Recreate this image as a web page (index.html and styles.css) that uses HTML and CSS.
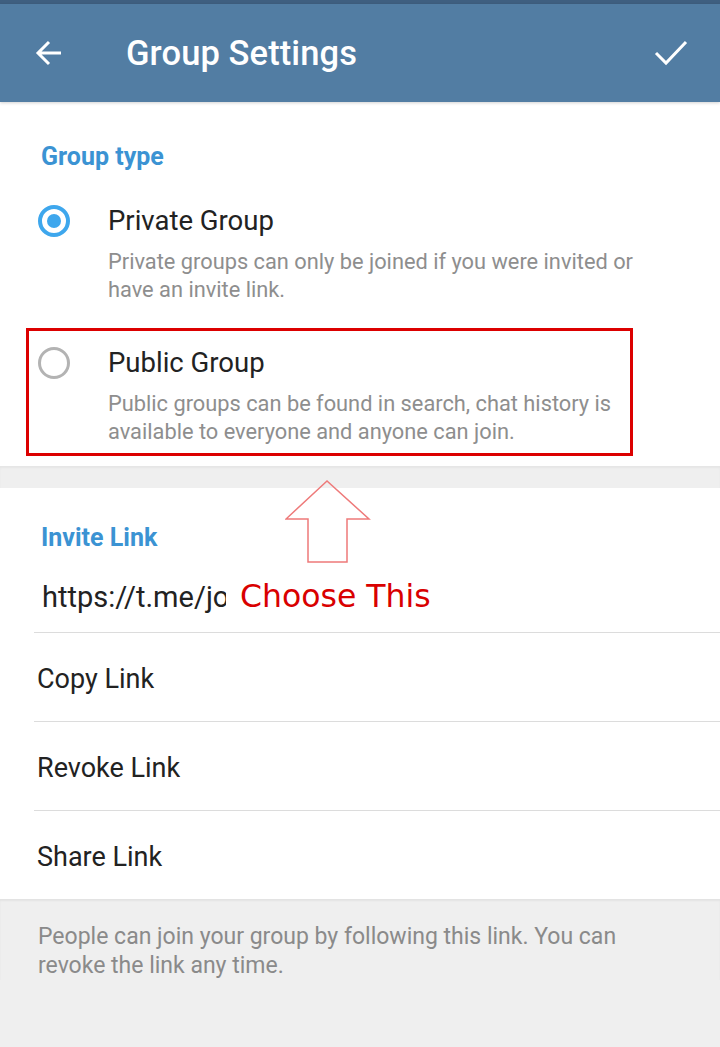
FILE: index.html
```html
<!DOCTYPE html>
<html>
<head>
<meta charset="utf-8">
<link rel="stylesheet" href="styles.css">
</head>
<body>
<div class="page">
  <div class="statusbar"></div>
  <header class="appbar">
    <svg class="back" width="30" height="30" viewBox="0 0 30 30"><path d="M27 15H4M15 4L4 15L15 26" fill="none" stroke="#fff" stroke-width="3"/></svg>
    <div class="title">Group Settings</div>
    <svg class="check" width="34" height="30" viewBox="0 0 34 30"><path d="M2 15L12 25L32 4" fill="none" stroke="#fff" stroke-width="3"/></svg>
  </header>

  <section class="card first">
    <div class="label">Group type</div>
    <div class="option selected-row">
      <span class="radio on"><span class="dot"></span></span>
      <div class="opt-text">
        <div class="opt-title">Private Group</div>
        <div class="opt-desc">Private groups can only be joined if you were invited or have an invite link.</div>
      </div>
    </div>
    <div class="highlight">
      <div class="option">
        <span class="radio"></span>
        <div class="opt-text">
          <div class="opt-title">Public Group</div>
          <div class="opt-desc">Public groups can be found in search, chat history is available to everyone and anyone can join.</div>
        </div>
      </div>
    </div>
  </section>

  <div class="gap"></div>

  <section class="card second">
    <div class="label">Invite Link</div>
    <div class="linkrow">https://t.me/jo</div>
    <div class="row">Copy Link</div>
    <div class="row">Revoke Link</div>
    <div class="row last">Share Link</div>
    <svg class="arrow" width="90" height="86" viewBox="0 0 90 86"><path d="M42 1L1 39H23V82H62V39H84Z" fill="none" stroke="#ee7a7a" stroke-width="1.5"/></svg>
    <div class="annot">Choose This</div>
  </section>

  <footer class="hint">People can join your group by following this link. You can revoke the link any time.</footer>
</div>
</body>
</html>
```

FILE: styles.css
```css
* { box-sizing: border-box; }
html, body { margin: 0; padding: 0; }
body {
  background: #efefef;
  font-family: "Roboto", "Noto Sans", sans-serif;
  width: 720px;
  height: 1047px;
  overflow: hidden;
}
.page { width: 720px; }
.statusbar { height: 4px; background: #3f5f80; }
.appbar {
  height: 98px;
  background: #527da3;
  display: flex;
  align-items: center;
  position: relative;
  z-index: 2;
  box-shadow: 0 1px 3px rgba(0,0,0,0.18);
}
.back { margin-left: 34px; }
.title {
  margin-left: 62px;
  color: #fff;
  font-size: 34.5px;
  font-weight: 500;
  flex: 1;
  letter-spacing: 0.1px;
}
.check { margin-right: 32px; }

.card { background: #fff; position: relative; }
.first { padding: 40px 0 10px 0; }
.label {
  color: #3b93d3;
  font-size: 25px;
  font-weight: 700;
  line-height: 30px;
  padding-left: 41px;
}
.option { display: flex; align-items: flex-start; }
.selected-row { padding: 32px 0 0 38px; }
.radio {
  width: 32px;
  height: 32px;
  border-radius: 50%;
  border: 3px solid #b3b3b3;
  flex: none;
  margin-top: 1px;
  display: flex;
  align-items: center;
  justify-content: center;
}
.radio.on { border: 4px solid #3ea7ed; }
.dot { width: 14px; height: 14px; border-radius: 50%; background: #3ea7ed; }
.opt-text { margin-left: 38px; }
.opt-title {
  color: #222;
  font-size: 27.5px;
  line-height: 34px;
}
.opt-desc {
  color: #8e8e8e;
  font-size: 21.8px;
  line-height: 28px;
  margin-top: 10px;
  width: 545px;
}
.highlight {
  margin: 24px 0 0 26px;
  width: 607px;
  border: 3px solid #dc0000;
  padding: 15px 0 7px 9px;
}
.gap {
  height: 22px;
  background: #efefef;
  box-shadow: inset 0 2px 2px rgba(0,0,0,0.04);
}
.second { padding-top: 35px; }
.linkrow {
  margin-left: 34px;
  padding: 27px 0 18px 8px;
  font-size: 29px;
  line-height: 34px;
  color: #222;
  border-bottom: 1px solid #dcdcdc;
  white-space: nowrap;
}
.row {
  margin-left: 34px;
  padding-left: 3px;
  padding-top: 3px;
  height: 89px;
  display: flex;
  align-items: center;
  font-size: 27px;
  color: #222;
  border-bottom: 1px solid #dcdcdc;
}
.row.last { border-bottom: none; height: 88px; }
.arrow { position: absolute; left: 285px; top: -8px; }
.annot {
  position: absolute;
  left: 226px;
  top: 88px;
  padding: 0 14px;
  width: 285px;
  background: #fff;
  color: #d90000;
  font-family: "DejaVu Sans", sans-serif;
  font-size: 31.5px;
  line-height: 40px;
  height: 48px;
}
.hint {
  padding: 23px 60px 0 38px;
  color: #8a8a8a;
  font-size: 23px;
  line-height: 29px;
  box-shadow: inset 0 2px 2px rgba(0,0,0,0.05);
}
```
